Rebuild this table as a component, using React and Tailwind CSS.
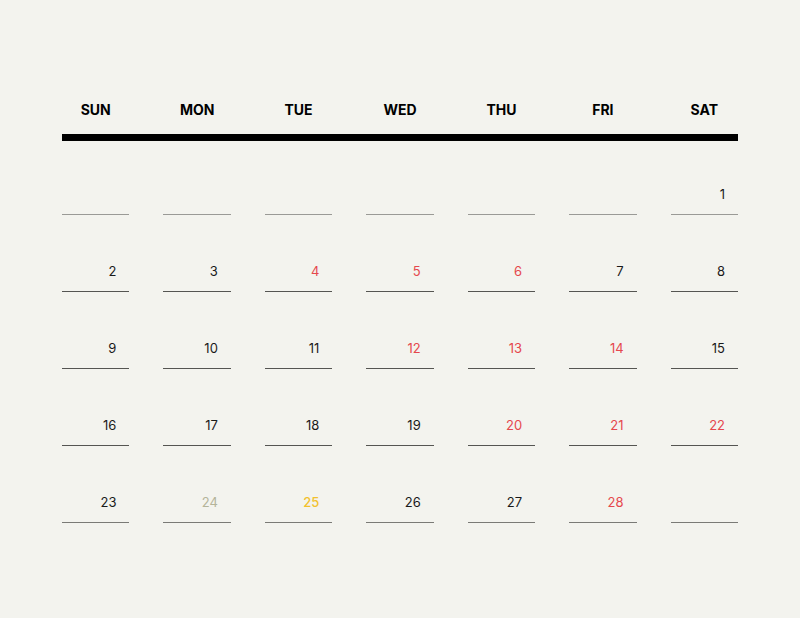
import React from "react";

const days = ["SUN", "MON", "TUE", "WED", "THU", "FRI", "SAT"];

// each cell: [label, colour]
const red = "text-[#e5484d]";
const ink = "text-[#1a1a1a]";
const cells = [
  null, null, null, null, null, null, ["1", ink],
  ["2", ink], ["3", ink], ["4", red], ["5", red], ["6", red], ["7", ink], ["8", ink],
  ["9", ink], ["10", ink], ["11", ink], ["12", red], ["13", red], ["14", red], ["15", ink],
  ["16", ink], ["17", ink], ["18", ink], ["19", ink], ["20", red], ["21", red], ["22", red],
  ["23", ink], ["24", "text-[#b4b49a]"], ["25", "text-[#f2c12e] font-medium"], ["26", ink], ["27", ink], ["28", red], null,
];

function lineColor(i) {
  if (i < 7) return "border-[#9a9a96]";
  if (i >= 28) return "border-[#7a7a76]";
  return "border-[#555552]";
}

function App() {
  return (
    <div
      className="min-h-screen w-full bg-[#f3f3ee] pt-[100px]"
      style={{ fontFamily: "Inter, 'Liberation Sans', sans-serif" }}
    >
      <div className="mx-auto w-[676px]">
        {/* Weekday header */}
        <div className="grid grid-cols-7 gap-x-[34px]">
          {days.map((d) => (
            <div
              key={d}
              className="h-[20px] text-center text-[14px] font-bold leading-[20px] text-black"
            >
              {d}
            </div>
          ))}
        </div>

        {/* Thick rule */}
        <div className="mt-[14px] h-[7px] w-full bg-black" />

        {/* Dates */}
        <div className="mt-[43px] grid grid-cols-7 gap-x-[34px] gap-y-[46px]">
          {cells.map((c, i) => (
            <div key={i} className={`border-b pb-[10px] ${lineColor(i)}`}>
              <div
                className={`h-[20px] pr-[13px] text-right text-[13px] leading-[20px] ${
                  c ? c[1] : ""
                }`}
              >
                {c ? c[0] : ""}
              </div>
            </div>
          ))}
        </div>
      </div>
    </div>
  );
}

export default App;
